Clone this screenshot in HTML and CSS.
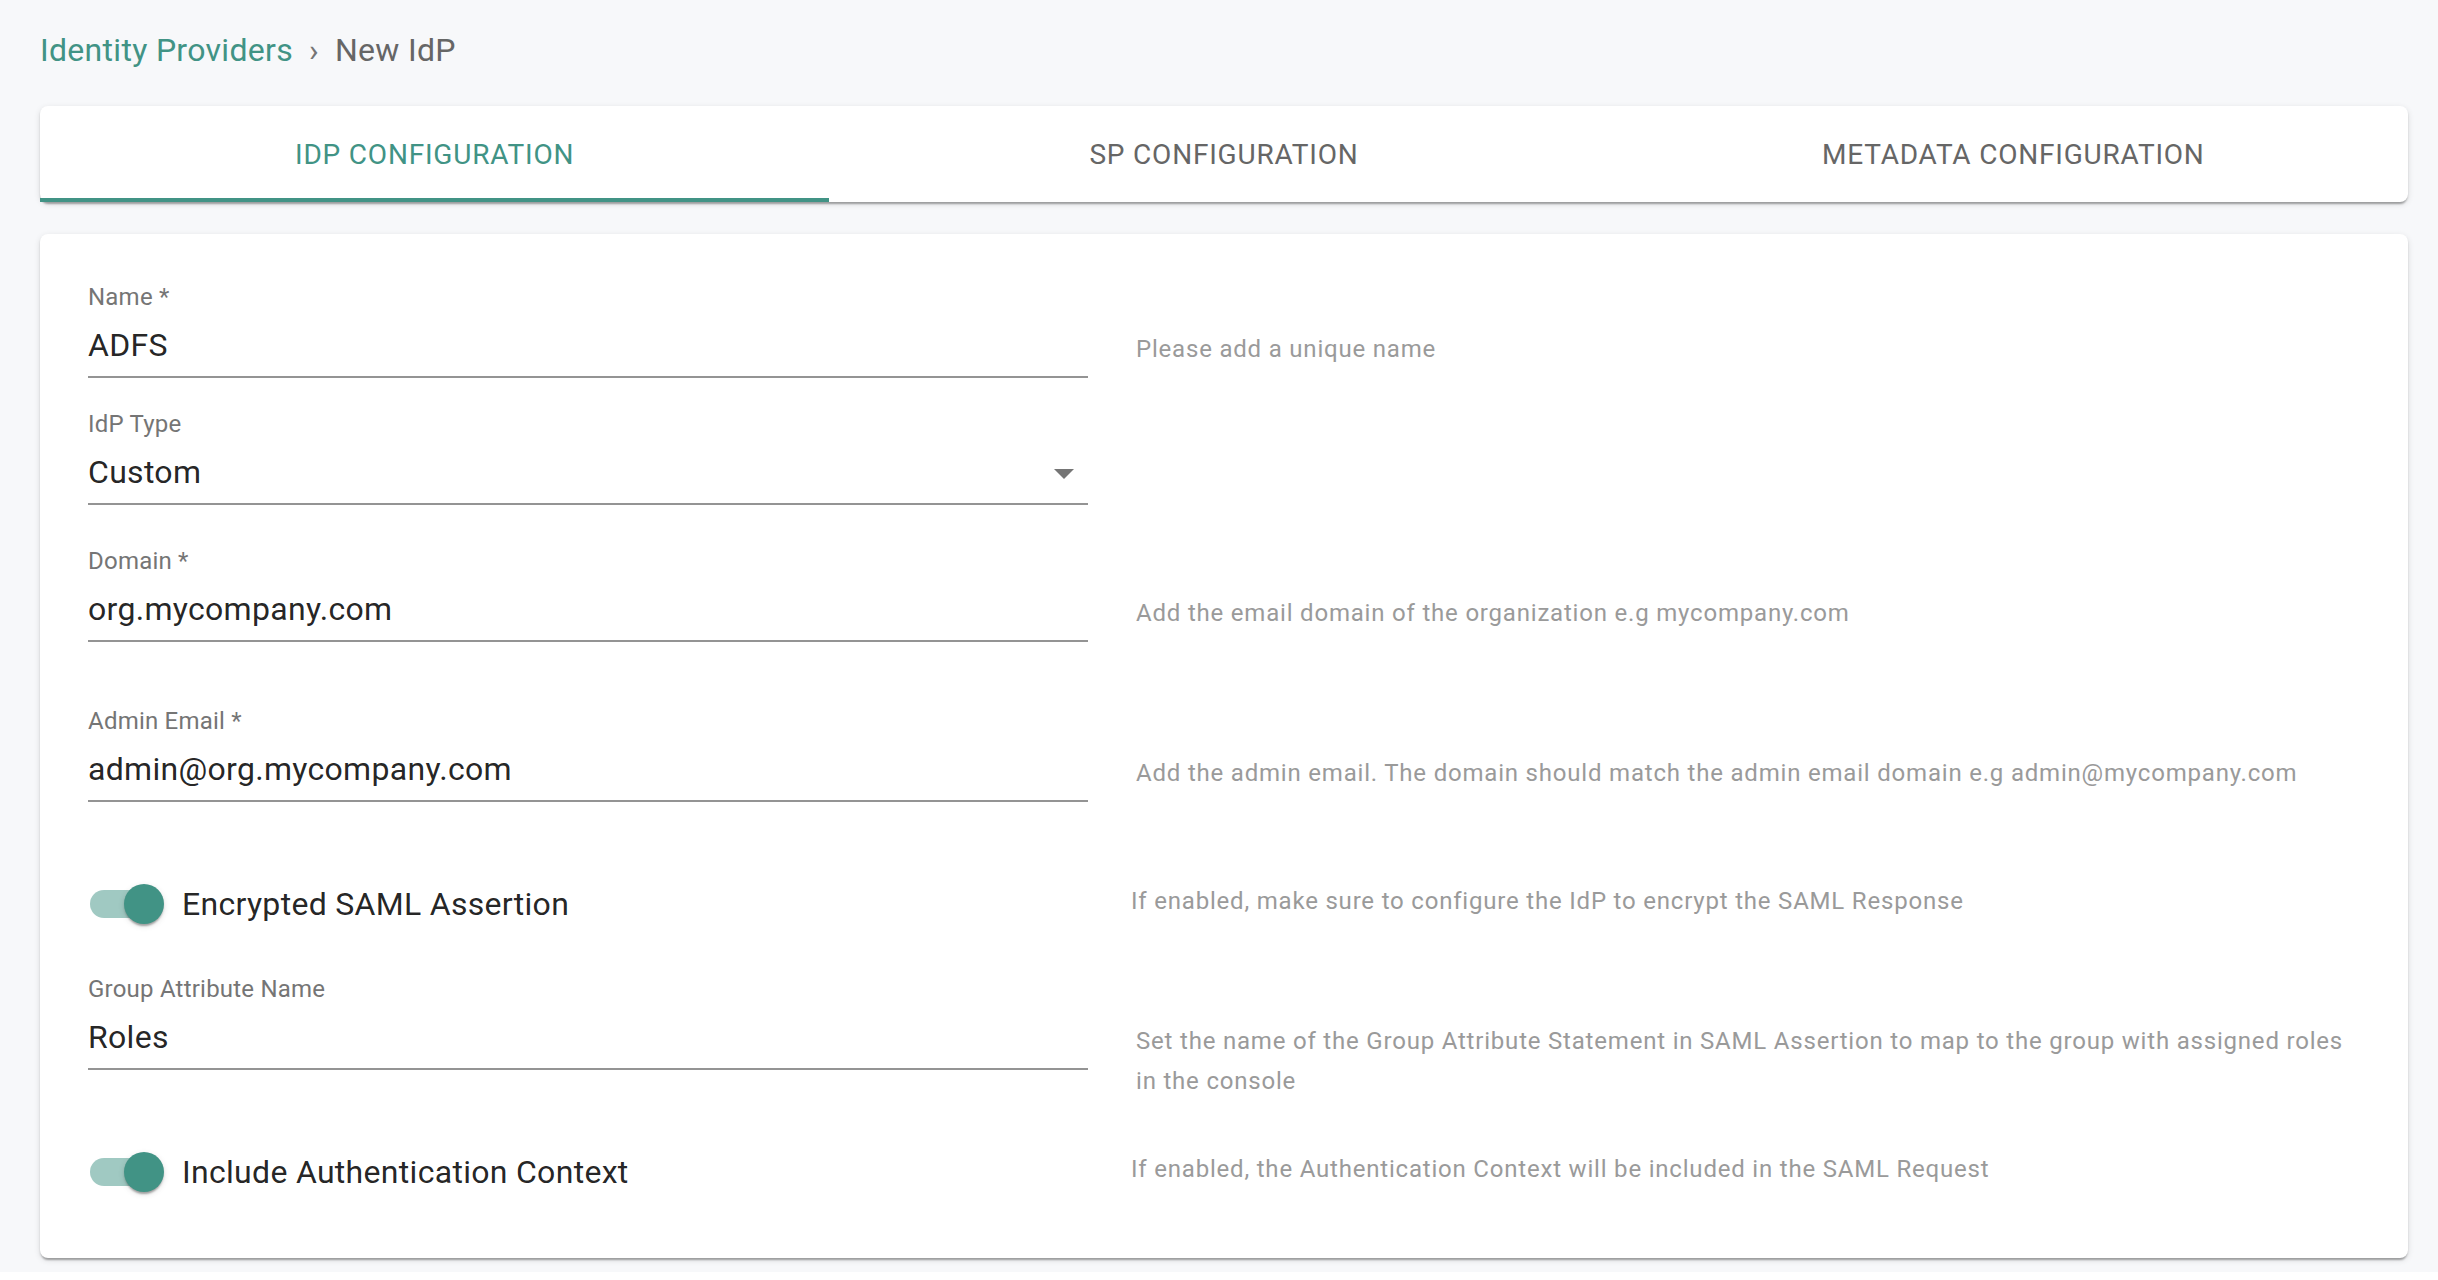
FILE: index.html
```html
<!DOCTYPE html>
<html lang="en">
<head>
<meta charset="utf-8">
<title>New IdP</title>
<link rel="stylesheet" href="styles.css">
</head>
<body>
<div class="page">
  <nav class="breadcrumb">
    <a class="crumb-link" href="#">Identity Providers</a>
    <span class="crumb-sep">›</span>
    <span class="crumb-current">New IdP</span>
  </nav>

  <div class="tabs-card">
    <div class="tab tab-active">IDP CONFIGURATION</div>
    <div class="tab">SP CONFIGURATION</div>
    <div class="tab">METADATA CONFIGURATION</div>
  </div>

  <div class="form-card">
    <div class="row">
      <div class="field">
        <div class="label">Name *</div>
        <div class="input">ADFS</div>
      </div>
      <div class="helper">Please add a unique name</div>
    </div>

    <div class="row gap-idp">
      <div class="field">
        <div class="label">IdP Type</div>
        <div class="input select">
          <span>Custom</span>
          <svg class="arrow" width="48" height="48" viewBox="0 0 24 24"><path d="M7 10l5 5 5-5z" fill="#757575"/></svg>
        </div>
      </div>
      <div class="helper"></div>
    </div>

    <div class="row gap-domain">
      <div class="field">
        <div class="label">Domain *</div>
        <div class="input">org.mycompany.com</div>
      </div>
      <div class="helper">Add the email domain of the organization e.g mycompany.com</div>
    </div>

    <div class="row gap-admin">
      <div class="field">
        <div class="label">Admin Email *</div>
        <div class="input">admin@org.mycompany.com</div>
      </div>
      <div class="helper">Add the admin email. The domain should match the admin email domain e.g admin@mycompany.com</div>
    </div>

    <div class="row toggle-row gap-toggle1">
      <label class="switch-label">
        <span class="switch"><span class="track"></span><span class="thumb"></span></span>
        <span class="switch-text">Encrypted SAML Assertion</span>
      </label>
      <div class="toggle-helper">If enabled, make sure to configure the IdP to encrypt the SAML Response</div>
    </div>

    <div class="row gap-group">
      <div class="field">
        <div class="label">Group Attribute Name</div>
        <div class="input">Roles</div>
      </div>
      <div class="helper">Set the name of the Group Attribute Statement in SAML Assertion to map to the group with assigned roles in the console</div>
    </div>

    <div class="row toggle-row gap-toggle2">
      <label class="switch-label">
        <span class="switch"><span class="track"></span><span class="thumb"></span></span>
        <span class="switch-text">Include Authentication Context</span>
      </label>
      <div class="toggle-helper">If enabled, the Authentication Context will be included in the SAML Request</div>
    </div>
  </div>
</div>
</body>
</html>
```

FILE: styles.css
```css
html {
  background: #ffffff;
}
body {
  margin: 0;
  font-family: Roboto, "Noto Sans", "Liberation Sans", sans-serif;
  color: rgba(0, 0, 0, 0.87);
}
.page {
  background: #f7f8fa;
  padding: 26px 30px 14px 40px;
}

/* Breadcrumb */
.breadcrumb {
  display: flex;
  align-items: center;
  font-size: 32px;
  line-height: 48px;
  letter-spacing: 0.3px;
  height: 48px;
}
.crumb-link {
  color: #419385;
  text-decoration: none;
}
.crumb-sep {
  color: #757575;
  margin: 0 16px;
}
.crumb-current {
  color: #666666;
}

/* Tabs */
.tabs-card {
  margin-top: 32px;
  background: #fff;
  border-radius: 8px;
  box-shadow: 0 4px 2px -2px rgba(0,0,0,0.2), 0 2px 2px 0 rgba(0,0,0,0.14), 0 2px 6px 0 rgba(0,0,0,0.12);
  display: flex;
  height: 96px;
}
.tab {
  flex: 1 1 0;
  display: flex;
  align-items: center;
  justify-content: center;
  padding-top: 2px;
  font-size: 28px;
  line-height: 28px;
  letter-spacing: 0.8px;
  font-weight: 400;
  color: #666666;
}
.tab-active {
  color: #419385;
  box-shadow: inset 0 -4px 0 #419385;
}

/* Form card */
.form-card {
  margin-top: 32px;
  background: #fff;
  border-radius: 8px;
  box-shadow: 0 4px 2px -2px rgba(0,0,0,0.2), 0 2px 2px 0 rgba(0,0,0,0.14), 0 2px 6px 0 rgba(0,0,0,0.12);
  padding: 51px 48px 48px 48px;
}
.row {
  display: grid;
  grid-template-columns: 1000px 1fr;
  column-gap: 48px;
  align-items: start;
}
.gap-idp { margin-top: 34px; }
.gap-domain { margin-top: 44px; }
.gap-admin { margin-top: 67px; }
.gap-toggle1 { margin-top: 64px; }
.gap-group { margin-top: 35px; }
.gap-toggle2 { margin-top: 33px; }

.field {
  display: flex;
  flex-direction: column;
}
.label {
  font-size: 24px;
  line-height: 24px;
  letter-spacing: 0.22px;
  color: #757575;
}
.input {
  margin-top: 17px;
  font-size: 32px;
  line-height: 38px;
  letter-spacing: 0.3px;
  color: rgba(0, 0, 0, 0.87);
  padding-bottom: 12px;
  border-bottom: 2px solid #949494;
}
.select {
  display: flex;
  justify-content: space-between;
  align-items: flex-start;
}
.arrow {
  display: block;
  margin-top: -4px;
  margin-bottom: -6px;
}
.helper {
  padding-top: 44px;
  font-size: 24px;
  line-height: 40px;
  letter-spacing: 0.8px;
  color: #9a9a9a;
}

/* Toggles */
.toggle-row {
  align-items: center;
}
.switch-label {
  display: flex;
  align-items: center;
  margin-left: -22px;
}
.switch {
  position: relative;
  display: block;
  width: 116px;
  height: 76px;
  padding: 24px;
  box-sizing: border-box;
  flex-shrink: 0;
}
.track {
  display: block;
  width: 68px;
  height: 28px;
  border-radius: 14px;
  background: #419385;
  opacity: 0.5;
}
.thumb {
  position: absolute;
  left: 58px;
  top: 18px;
  width: 40px;
  height: 40px;
  border-radius: 50%;
  background: #419385;
  box-shadow: 0 4px 2px -2px rgba(0,0,0,0.2), 0 2px 2px 0 rgba(0,0,0,0.14), 0 2px 6px 0 rgba(0,0,0,0.12);
}
.switch-text {
  font-size: 32px;
  line-height: 48px;
  letter-spacing: 0.3px;
  color: rgba(0, 0, 0, 0.87);
}
.toggle-helper {
  margin-left: -5px;
  padding-bottom: 7px;
  font-size: 24px;
  line-height: 40px;
  letter-spacing: 0.8px;
  color: #9a9a9a;
}
```
